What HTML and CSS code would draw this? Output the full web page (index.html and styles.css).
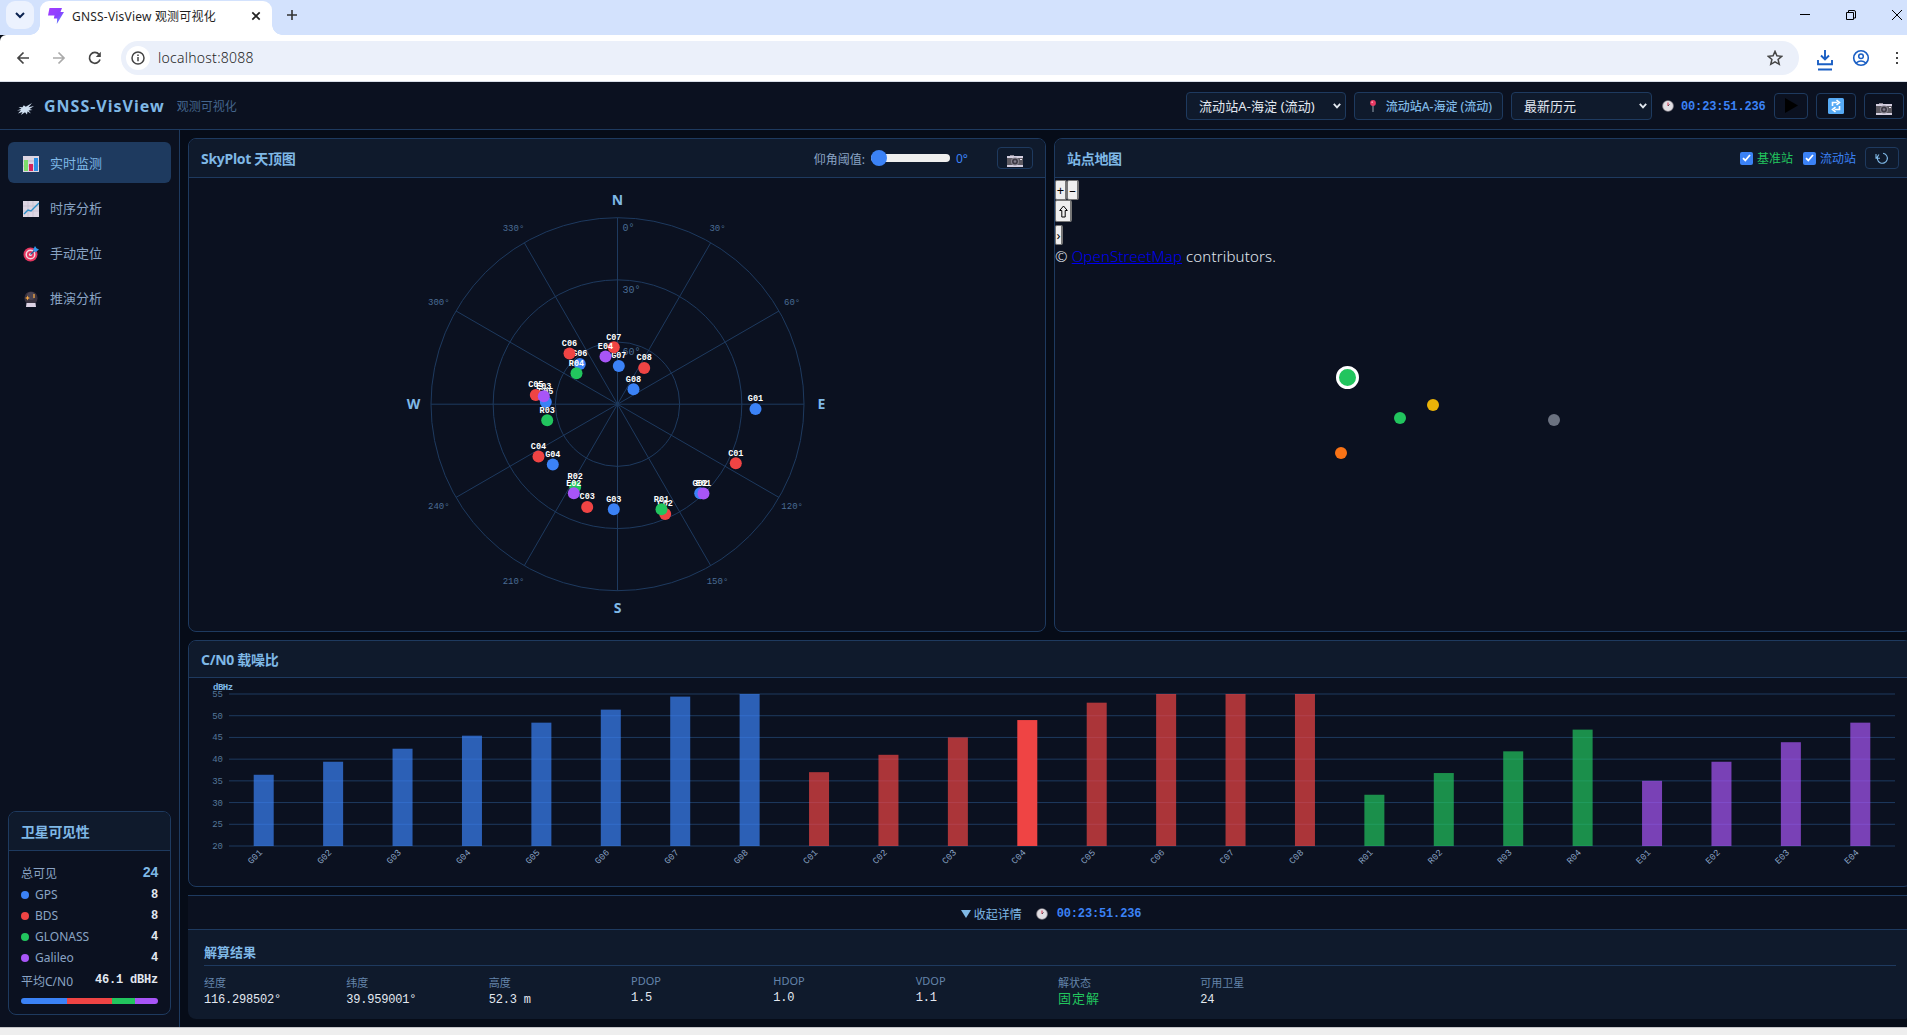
FILE: index.html
```
<!DOCTYPE html>
<html lang="zh-CN">
<head>
    <meta charset="UTF-8">
    <meta name="viewport" content="width=device-width, initial-scale=1.0">
    <title>GNSS-VisView 观测可视化</title>
    <link rel="stylesheet" href="styles.css">
</head>
<body>
    <!-- shared icons -->
    <svg class="defs" width="0" height="0">
        <symbol id="i-camera" viewBox="0 0 16 16">
            <path d="M0 4h16v11H0z" fill="#5d5a62"/>
            <path d="M0 4h16v2H0zM0 13h16v2H0z" fill="#d5cfe0"/>
            <path d="M3 3h4v1H3z" fill="#8e8a96"/>
            <circle cx="8" cy="9.5" r="4" fill="#8a8691"/>
            <circle cx="8" cy="9.5" r="3" fill="#3d3a45"/>
            <circle cx="8" cy="9.5" r="1.3" fill="#817d8c"/>
            <path d="M13 7h2v1h-2z" fill="#e7e2ee"/>
        </symbol>
        <symbol id="i-clock" viewBox="0 0 12 12">
            <circle cx="6" cy="6" r="5.8" fill="#8c8890"/>
            <circle cx="6" cy="6" r="4.9" fill="#e2dfe4"/>
            <path d="M6 6V2.5" stroke="#d8324c" stroke-width="1"/>
            <path d="M6 6l1.6-1.6" stroke="#3a3640" stroke-width="0.8"/>
        </symbol>
    </svg>

    <div class="browser">
        <div class="tab-strip">
            <div class="tab-search">
                <svg width="10" height="7" viewBox="0 0 10 7"><path d="M1 1l4 4 4-4" fill="none" stroke="#0b2350" stroke-width="2"/></svg>
            </div>
            <div class="tab">
                <svg class="favicon" width="16" height="16" viewBox="0 0 16 16">
                    <defs><linearGradient id="fav" x1="0" y1="0" x2="1" y2="1"><stop offset="0" stop-color="#a53dff"/><stop offset="0.55" stop-color="#8a40ff"/><stop offset="1" stop-color="#45b5ff"/></linearGradient></defs>
                    <path d="M1.5 0h12.500L12.500 4H16L8.800 16l.4-5.500H5.800L6.500 7.500H0z" fill="url(#fav)"/>
                </svg>
                <span class="tab-title">GNSS-VisView 观测可视化</span>
                <svg width="10" height="10" viewBox="0 0 10 10"><path d="M1.300 1.300l7.400 7.400M8.700 1.300L1.300 8.700" stroke="#222" stroke-width="1.700"/></svg>
            </div>
            <svg class="new-tab" width="12" height="12" viewBox="0 0 12 12"><path d="M6 1v10M1 6h10" stroke="#333" stroke-width="1.600"/></svg>
            <div class="window-buttons">
                <svg width="12" height="12" viewBox="0 0 12 12"><path d="M1 5.500h10" stroke="#000" stroke-width="1"/></svg>
                <svg width="12" height="12" viewBox="0 0 12 12"><path d="M1.500 3.500h7v7h-7zM3.500 3V1.500h5.500q1.500 0 1.500 1.500v6H9" fill="none" stroke="#000" stroke-width="1"/></svg>
                <svg width="12" height="12" viewBox="0 0 12 12"><path d="M1 1l10 10M11 1L1 11" stroke="#000" stroke-width="1"/></svg>
            </div>
        </div>
        <div class="toolbar">
            <svg width="14" height="14" viewBox="0 0 14 14"><path d="M13 7H2M7.500 1.500L2 7l5.500 5.500" fill="none" stroke="#444" stroke-width="1.700"/></svg>
            <svg width="14" height="14" viewBox="0 0 14 14"><path d="M1 7h11M6.500 1.500L12 7l-5.500 5.500" fill="none" stroke="#aaa" stroke-width="1.700"/></svg>
            <svg width="14" height="14" viewBox="0 0 14 14"><path d="M12 8.500A5.400 5.400 0 1 1 11 3.400" fill="none" stroke="#444" stroke-width="1.700"/><path d="M12.800 0.800v5.200H7.800z" fill="#444"/></svg>
            <div class="address">
                <span class="site-info">
                    <svg width="14" height="14" viewBox="0 0 14 14"><circle cx="7" cy="7" r="6" fill="none" stroke="#444" stroke-width="1.500"/><path d="M7 6v4.200M7 3.600v1.500" stroke="#444" stroke-width="1.500"/></svg>
                </span>
                <span class="url">localhost:8088</span>
                <svg class="star-icon" width="14" height="14" viewBox="0 0 14 14"><path d="M7 1.200l1.700 3.900 4.200.4-3.200 2.800 1 4.200L7 10.300l-3.700 2.200 1-4.200L1.100 5.500l4.200-.4z" fill="none" stroke="#444" stroke-width="1.300"/></svg>
            </div>
            <svg class="download" width="16" height="22" viewBox="0 0 16 22"><path d="M8 1v9M4 6.500l4 4 4-4M1 11v4.200h14V11M1 20.500h14" fill="none" stroke="#1a5fc4" stroke-width="1.900"/></svg>
            <svg class="profile" width="18" height="18" viewBox="0 0 18 18"><circle cx="9" cy="9" r="7.300" fill="none" stroke="#1a5fc4" stroke-width="1.600"/><circle cx="9" cy="7.200" r="2.300" fill="none" stroke="#1a5fc4" stroke-width="1.500"/><path d="M4 14q5-4 10 0" fill="none" stroke="#1a5fc4" stroke-width="1.500"/></svg>
            <svg class="menu-dots" width="4" height="14" viewBox="0 0 4 14"><path d="M1 1h2v2H1zM1 6h2v2H1zM1 11h2v2H1z" fill="#444"/></svg>
        </div>
    </div>

    <div class="app">
        <header class="header">
            <svg class="logo" width="18" height="14" viewBox="0 0 18 14"><path d="M1.500 5l4 .3 1.300-2 2 1.500L15 1l-3.500 4.300L17 4l-4.500 3 3 1-4 .5 2.500 3-3.500-2-.5 3-2-2.300L4 13l1.500-3L1 11.500l3-3.300L0 8.500l4.500-1.700z" fill="#cfdff0"/></svg>
            <h1 class="brand">GNSS-VisView</h1>
            <span class="subtitle">观测可视化</span>
            <div class="header-actions">
                <div class="select select-station"><span>流动站A-海淀 (流动)</span><svg width="8" height="6" viewBox="0 0 8 6"><path d="M.8.8L4 4.400 7.200.8" fill="none" stroke="#e2e8f0" stroke-width="1.800"/></svg></div>
                <div class="station-tag">
                    <svg width="8" height="12" viewBox="0 0 8 12"><path d="M4 5v7" stroke="#9aa5b1" stroke-width="1"/><circle cx="4" cy="3" r="2.900" fill="#e83a63"/><circle cx="3.200" cy="2.200" r=".9" fill="#ff9cb3"/></svg>
                    <span>流动站A-海淀 (流动)</span>
                </div>
                <div class="select select-epoch"><span>最新历元</span><svg width="8" height="6" viewBox="0 0 8 6"><path d="M.8.8L4 4.400 7.200.8" fill="none" stroke="#e2e8f0" stroke-width="1.800"/></svg></div>
                <div class="epoch"><svg width="12" height="12"><use href="#i-clock"/></svg><span class="time">00:23:51.236</span></div>
                <button class="btn btn-play"><svg width="13" height="15" viewBox="0 0 13 15"><path d="M0 0v15l13-7.500z" fill="#000"/></svg></button>
                <button class="btn btn-wide"><svg width="16" height="16" viewBox="0 0 16 16"><rect width="16" height="16" rx="1.500" fill="#56aaf5"/><path d="M4.500 8V4.500h5M8.500 2l3 2.500-3 2.500M11.500 8v3.500h-5M7.500 9l-3 2.500 3 2.500" fill="none" stroke="#fff" stroke-width="1.600"/></svg></button>
                <button class="btn btn-wide"><svg class="camera" width="16" height="16"><use href="#i-camera"/></svg></button>
            </div>
        </header>

        <div class="layout">
            <aside class="sidebar">
                <nav class="nav">
                    <a class="nav-item active">
                        <svg width="16" height="16" viewBox="0 0 16 16"><path d="M0 0h16v16H0z" fill="#ddd6e3"/><path d="M0 5h16M0 10h16" stroke="#b9b1c2" stroke-width=".7"/><path d="M1 4h4v11H1z" fill="#7ddc6a"/><path d="M6 8h4v7H6z" fill="#d3245c"/><path d="M11 2h4v13h-4z" fill="#2c8fe6"/></svg>
                        <span>实时监测</span>
                    </a>
                    <a class="nav-item">
                        <svg width="16" height="16" viewBox="0 0 16 16"><path d="M0 0h16v16H0z" fill="#ddd6e3"/><path d="M0 5h16M0 10h16M5 0v16M10 0v16" stroke="#c3bccb" stroke-width=".7"/><path d="M1 13l4-4 3 1 8-8" fill="none" stroke="#2c8fc8" stroke-width="1.400"/></svg>
                        <span>时序分析</span>
                    </a>
                    <a class="nav-item">
                        <svg width="16" height="16" viewBox="0 0 16 16"><circle cx="7.500" cy="8.500" r="7" fill="#e3355f"/><circle cx="7.500" cy="8.500" r="5" fill="#f3d7e0"/><circle cx="7.500" cy="8.500" r="3.500" fill="#e3355f"/><circle cx="7.500" cy="8.500" r="1.600" fill="#f3d7e0"/><path d="M7.500 8.500L13 3" stroke="#1c5e9a" stroke-width="1.300"/><path d="M10 4l2-4 1.500 2.200L16 3.500l-3.500 2.700z" fill="#2f9bef"/></svg>
                        <span>手动定位</span>
                    </a>
                    <a class="nav-item">
                        <svg width="16" height="16" viewBox="0 0 16 16"><circle cx="8" cy="7" r="6.600" fill="#39323f"/><circle cx="8" cy="5" r="4" fill="#4b4452"/><path d="M3.500 12h9l.5 4H3z" fill="#ddd3e4"/><path d="M4.500 4.500l.7 1.800 1.800.7-1.800.7-.7 1.800-.7-1.800L2 7l1.800-.7z" fill="#f5a742"/><path d="M11 3v4" stroke="#f5a742" stroke-width="1.300"/></svg>
                        <span>推演分析</span>
                    </a>
                </nav>

                <section class="card visibility">
                    <div class="card-header"><h3>卫星可见性</h3></div>
                    <div class="visibility-body">
                        <div class="row total"><span>总可见</span><b>24</b></div>
                        <div class="row"><span><i class="dot gps"></i>GPS</span><b>8</b></div>
                        <div class="row"><span><i class="dot bds"></i>BDS</span><b>8</b></div>
                        <div class="row"><span><i class="dot glonass"></i>GLONASS</span><b>4</b></div>
                        <div class="row"><span><i class="dot galileo"></i>Galileo</span><b>4</b></div>
                        <div class="row average"><span>平均C/N0</span><b>46.1 dBHz</b></div>
                        <div class="ratio-bar">
                            <i class="gps" style="flex: 8"></i><i class="bds" style="flex: 8"></i><i class="glonass" style="flex: 4"></i><i class="galileo" style="flex: 4"></i>
                        </div>
                    </div>
                </section>
            </aside>

            <main class="main">
                <div class="top-row">
                    <section class="card sky">
                        <div class="card-header">
                            <h3>SkyPlot 天顶图</h3>
                            <div class="sky-tools">
                                <span class="mask-label">仰角阈值:</span>
                                <span class="slider"><i class="thumb"></i></span>
                                <span class="mask-value">0°</span>
                                <button class="btn-sm btn-camera"><svg class="camera" width="16" height="16"><use href="#i-camera"/></svg></button>
                            </div>
                        </div>
                        <svg id="skyplot" class="skyplot" width="856" height="452" viewBox="0 0 856 452"></svg>
                    </section>

                    <section class="card map">
                        <div class="card-header">
                            <h3>站点地图</h3>
                            <div class="map-tools">
                                <label class="base"><i class="check"><svg width="9" height="8" viewBox="0 0 9 8"><path d="M1 4.200l2.300 2.300L8 1" fill="none" stroke="#fff" stroke-width="1.800"/></svg></i>基准站</label>
                                <label class="rover"><i class="check"><svg width="9" height="8" viewBox="0 0 9 8"><path d="M1 4.200l2.300 2.300L8 1" fill="none" stroke="#fff" stroke-width="1.800"/></svg></i>流动站</label>
                                <button class="btn-sm btn-reset"><svg width="14" height="13" viewBox="0 0 14 13"><path d="M3.400 3.200A5 5 0 1 0 8 1.300M1 2v4.300h4M1.300 6.200L4 2.500" fill="none" stroke="#7fb8e6" stroke-width="1.100"/></svg></button>
                            </div>
                        </div>
                        <div class="map-body">
                            <div class="ol-zoom"><button>+</button><button>–</button></div>
                            <div class="ol-rotate"><button><svg width="9" height="13" viewBox="0 0 9 13"><path d="M4.500 1L8.300 5.500H6.200v6.500H2.800V5.500H.7z" fill="none" stroke="#000" stroke-width="1"/></svg></button></div>
                            <div class="ol-attribution"><button>›</button></div>
                            <div class="attribution">© <a href="#">OpenStreetMap</a> contributors.</div>
                            <svg class="stations" width="857" height="452" viewBox="0 0 857 452">
                                <circle cx="292.500" cy="199.500" r="10" fill="#22c55e" stroke="#fff" stroke-width="3"/>
                                <circle cx="378" cy="227" r="6" fill="#eab308"/>
                                <circle cx="345" cy="240" r="6" fill="#22c55e"/>
                                <circle cx="499" cy="242" r="6" fill="#6b7280"/>
                                <circle cx="286" cy="275" r="6" fill="#f97316"/>
                            </svg>
                        </div>
                    </section>
                </div>

                <section class="card cn0">
                    <div class="card-header"><h3>C/N0 载噪比</h3></div>
                    <svg id="cn0-chart" class="cn0-chart" width="1722" height="208" viewBox="0 0 1722 208"></svg>
                </section>

                <section class="details">
                    <div class="details-toggle">
                        <svg width="10" height="8" viewBox="0 0 10 8"><path d="M0 0h10L5 8z" fill="#7fb8e6"/></svg>
                        <span class="toggle-text">收起详情</span>
                        <svg class="toggle-clock" width="12" height="12"><use href="#i-clock"/></svg>
                        <span class="time">00:23:51.236</span>
                    </div>
                    <div class="details-body">
                        <h4>解算结果</h4>
                        <div class="result-grid">
                            <div class="result"><span>经度</span><b>116.298502°</b></div>
                            <div class="result"><span>纬度</span><b>39.959001°</b></div>
                            <div class="result"><span>高度</span><b>52.3 m</b></div>
                            <div class="result latin"><span>PDOP</span><b>1.5</b></div>
                            <div class="result latin"><span>HDOP</span><b>1.0</b></div>
                            <div class="result latin"><span>VDOP</span><b>1.1</b></div>
                            <div class="result"><span>解状态</span><b class="fixed">固定解</b></div>
                            <div class="result"><span>可用卫星</span><b>24</b></div>
                        </div>
                    </div>
                </section>
            </main>
        </div>
    </div>
    <div class="taskbar"></div>

    <script src="charts.js"></script>
</body>
</html>
```

FILE: styles.css
```
* {
    box-sizing: border-box;
}

body {
    margin: 0;
    width: 1907px;
    height: 1035px;
    overflow: hidden;
    font-family: 'Noto Sans', 'Noto Sans CJK SC', sans-serif;
    background: #060c18;
    color: #e2e8f0;
}

h1, h3, h4 {
    margin: 0;
}

button {
    padding: 0;
    font-family: inherit;
}

svg {
    display: block;
    flex: none;
}

.defs {
    position: absolute;
}

/* Browser window */
.tab-strip {
    height: 35px;
    display: flex;
    align-items: flex-start;
    background: #d3e2fd;
}

.tab-search {
    width: 28px;
    height: 28px;
    margin: 1px 6px 0;
    border-radius: 9px;
    background: #ecf2fe;
    display: flex;
    align-items: center;
    justify-content: center;
}

.tab {
    position: relative;
    width: 232px;
    height: 34px;
    margin-top: 1px;
    padding: 0 11px 5px 8px;
    border-radius: 9px 9px 0 0;
    background: #fff;
    display: flex;
    align-items: center;
}

/* curved feet of the active tab */
.tab::before,
.tab::after {
    content: '';
    position: absolute;
    bottom: 0;
    width: 10px;
    height: 10px;
}

.tab::before {
    left: -10px;
    background: radial-gradient(circle at 0 0, transparent 9.5px, #fff 10px);
}

.tab::after {
    right: -10px;
    background: radial-gradient(circle at 100% 0, transparent 9.5px, #fff 10px);
}

.tab-title {
    margin: 0 auto 0 8px;
    font-size: 12px;
    letter-spacing: 0.2px;
    white-space: nowrap;
    color: #1f1f1f;
}

.new-tab {
    margin: 9px 0 0 14px;
}

.window-buttons {
    display: flex;
    gap: 34px;
    margin: 9px 4px 0 auto;
}

.toolbar {
    height: 47px;
    padding: 0 8px 0 16px;
    border-bottom: 1px solid #d9dfe8;
    border-radius: 6px 0 0 0;
    background: #fff;
    display: flex;
    align-items: center;
}

.toolbar > svg:nth-child(2),
.toolbar > svg:nth-child(3) {
    margin-left: 22px;
}

.address {
    flex: 1;
    height: 34px;
    margin-left: 19px;
    padding: 0 16px 0 5px;
    border-radius: 17px;
    background: #ebf0fa;
    display: flex;
    align-items: center;
}

.site-info {
    width: 24px;
    height: 24px;
    border-radius: 50%;
    background: #fff;
    display: flex;
    align-items: center;
    justify-content: center;
}

.url {
    margin: -1px 0 0 8px;
    font-size: 14px;
    font-weight: 300;
    letter-spacing: 0.25px;
    color: #1f1f1f;
}

.star-icon {
    margin-left: auto;
    width: 16px;
    height: 16px;
}

.download {
    margin: 4px 0 0 18px;
}

.profile {
    margin-left: 19px;
}

.menu-dots {
    margin-left: 25px;
}

/* App frame, wider than the window */
.app {
    width: 1920px;
    height: 945px;
    display: flex;
    flex-direction: column;
}

.header {
    height: 48px;
    padding: 0 16px 0 17px;
    border-bottom: 1px solid #1e3a5f;
    background: #0b1120;
    display: flex;
    align-items: center;
}

.logo {
    margin-top: 6px;
}

.brand {
    margin-left: 9px;
    font-size: 16px;
    line-height: 24px;
    letter-spacing: 1px;
    color: #7fb8e6;
}

.subtitle {
    margin: 1px 0 0 12px;
    font-size: 12px;
    color: #44658c;
}

.header-actions {
    margin-left: auto;
    display: flex;
    align-items: center;
    gap: 8px;
}

.select,
.station-tag {
    height: 28px;
    border: 1px solid #1e3a5f;
    border-radius: 4px;
    background: #0f1a2c;
    font-size: 13px;
    display: flex;
    align-items: center;
    justify-content: space-between;
    white-space: nowrap;
}

.select {
    padding: 0 4px 0 12px;
}

.select-station {
    width: 160px;
    letter-spacing: 0.1px;
}

.select-epoch {
    width: 141px;
}

.station-tag {
    width: 149px;
    padding: 0 10px 0 14px;
    font-size: 12px;
    font-weight: 500;
    color: #7fb8e6;
}

.epoch {
    width: 106px;
    padding-left: 2px;
    display: flex;
    align-items: center;
    gap: 7px;
}

.time {
    font-family: 'Liberation Mono', monospace;
    font-size: 12px;
    font-weight: bold;
    letter-spacing: -0.15px;
    color: #3b82f6;
}

.epoch .time {
    margin-top: 2px;
}

.btn,
.btn-sm {
    height: 26px;
    border: 1px solid #1e3a5f;
    border-radius: 4px;
    background: #0b1120;
    display: flex;
    align-items: center;
    justify-content: center;
}

.btn-play {
    width: 34px;
}

.btn-wide {
    width: 40px;
}

.btn-wide .camera {
    margin-top: 4px;
}

.layout {
    flex: 1;
    min-height: 0;
    display: flex;
}

/* Sidebar */
.sidebar {
    width: 180px;
    padding: 12px 8px;
    border-right: 1px solid #1e3a5f;
    background: #0b1120;
    display: flex;
    flex-direction: column;
    justify-content: space-between;
}

.nav {
    display: flex;
    flex-direction: column;
    gap: 4px;
}

.nav-item {
    height: 41px;
    padding: 0 15px;
    border-radius: 6px;
    font-size: 13px;
    color: #8aa4c4;
    display: flex;
    align-items: center;
    gap: 11px;
}

.nav-item svg {
    margin-top: 2px;
}

.nav-item.active {
    background: #1e3a5f;
    color: #7fb8e6;
}

.card {
    border: 1px solid #1e3a5f;
    border-radius: 8px;
    background: #0b1120;
    overflow: hidden;
}

.card-header {
    height: 39px;
    padding: 0 12px;
    border-bottom: 1px solid #1e3a5f;
    background: #0f1a2c;
    display: flex;
    align-items: center;
    justify-content: space-between;
}

.card-header h3 {
    font-size: 14px;
    font-weight: bold;
    letter-spacing: -0.3px;
    color: #7fb8e6;
}

.visibility {
    height: 204px;
}

.visibility-body {
    padding: 10px 12px;
}

.row {
    height: 21px;
    display: flex;
    align-items: center;
    justify-content: space-between;
    font-size: 12px;
    color: #8aa4c4;
}

.row.total {
    height: 23px;
}

.row.average {
    height: 25px;
}

.row.average b {
    margin-top: -2px;
}

.row b {
    font-family: 'Liberation Mono', monospace;
    font-size: 12px;
    letter-spacing: -0.2px;
    color: #e2e8f0;
}

.row.total b {
    font-size: 14px;
    letter-spacing: -0.7px;
    color: #7fb8e6;
}

.dot {
    display: inline-block;
    width: 8px;
    height: 8px;
    margin-right: 6px;
    border-radius: 50%;
}

.gps {
    background: #3b82f6;
}

.bds {
    background: #ef4444;
}

.glonass {
    background: #22c55e;
}

.galileo {
    background: #a855f7;
}

.ratio-bar {
    height: 6px;
    margin-top: 5px;
    border-radius: 3px;
    overflow: hidden;
    display: flex;
}

/* Main area */
.main {
    flex: 1;
    padding: 8px;
    display: flex;
    flex-direction: column;
    gap: 8px;
}

.top-row {
    height: 494px;
    display: grid;
    grid-template-columns: 1fr 1fr;
    gap: 8px;
}

.sky-tools {
    display: flex;
    align-items: center;
    font-size: 12px;
    color: #8aa4c4;
}

.mask-label {
    margin-top: 2px;
}

.slider {
    width: 79px;
    height: 8px;
    margin: -1px 6px 0;
    border-radius: 4px;
    background: #efefef;
    display: flex;
    align-items: center;
}

.thumb {
    flex: none;
    width: 16px;
    height: 16px;
    border-radius: 50%;
    background: #3b82f6;
}

.mask-value {
    width: 41px;
    color: #3b82f6;
}

.btn-sm {
    height: 22px;
    background: #0f1a2c;
}

.btn-camera {
    width: 36px;
}

.btn-camera .camera {
    margin-top: 4px;
}

.map-tools {
    display: flex;
    align-items: center;
    gap: 10px;
    font-size: 12px;
}

.map-tools label {
    display: flex;
    align-items: center;
    gap: 4px;
}

.map-tools label.rover {
    margin-right: -1px;
}

.base {
    color: #22c55e;
}

.rover {
    color: #3b82f6;
}

.check {
    width: 13px;
    height: 13px;
    border-radius: 2px;
    background: #3b82f6;
    display: flex;
    align-items: center;
    justify-content: center;
}

.btn-reset {
    width: 34px;
}

.map-body {
    position: relative;
    padding-top: 2px;
}

/* map markers lie over the controls */
.stations {
    position: absolute;
    top: 0;
    left: 0;
}

.map-body button {
    height: 20px;
    border: 2px solid #767676;
    border-width: 1px 2px 1px 1px;
    border-radius: 2px;
    background: #efefef;
    font-size: 13px;
    line-height: 16px;
    color: #000;
}

.ol-zoom,
.ol-rotate,
.ol-attribution {
    display: flex;
}

.ol-zoom button {
    width: 12px;
}

.map-body .ol-rotate button {
    width: 17px;
    height: 22px;
    display: flex;
    align-items: center;
    justify-content: center;
}

.ol-attribution {
    margin-top: 3px;
}

.ol-attribution button {
    width: 8px;
}

.attribution {
    font-size: 15px;
    font-weight: 300;
    line-height: 22px;
    letter-spacing: 0.15px;
}

.attribution a {
    color: #0000ee;
}

.cn0 {
    height: 247px;
}

.cn0 .card-header {
    height: 37px;
}

svg text {
    font-family: 'Liberation Mono', monospace;
}

.grid-line {
    fill: none;
    stroke: #1e3a5f;
}

svg .cardinal {
    font-family: 'Noto Sans', sans-serif;
    font-size: 14px;
    font-weight: bold;
    fill: #7fb8e6;
    text-anchor: middle;
}

.degree {
    font-size: 9px;
    fill: #4a6c94;
    text-anchor: middle;
}

.elevation {
    font-size: 10px;
    fill: #4a6c94;
}

.sat-label {
    font-size: 8.500px;
    font-weight: bold;
    fill: #fff;
    text-anchor: middle;
}

.axis-label {
    font-size: 9px;
    fill: #557799;
    text-anchor: end;
}

.axis-unit {
    font-size: 9px;
    font-weight: bold;
    letter-spacing: -0.5px;
    fill: #7fb8e6;
}

.bar-label {
    font-size: 9px;
    fill: #8aa4c4;
    text-anchor: end;
}

.details {
    height: 124px;
    border-radius: 0 0 8px 8px;
    overflow: hidden;
    background: #0f1a2c;
}

.details-toggle {
    height: 35px;
    padding: 2px 0 0 2px;
    border-top: 1px solid #1e3a5f;
    border-bottom: 1px solid #1e3a5f;
    background: #0b1120;
    display: flex;
    align-items: center;
    justify-content: center;
}

.toggle-text {
    margin: 0 14px 0 3px;
    font-size: 12px;
    color: #7fb8e6;
}

.toggle-clock {
    margin-right: 9px;
}

.details-body {
    padding: 9px 16px 0;
}

.details-body h4 {
    height: 27px;
    border-bottom: 1px solid #1e3a5f;
    font-size: 13px;
    line-height: 26px;
    color: #7fb8e6;
}

.result-grid {
    margin-top: 9px;
    display: grid;
    grid-template-columns: repeat(12, 1fr);
    column-gap: 16px;
}

.result {
    display: flex;
    flex-direction: column;
}

.result span {
    font-size: 11px;
    line-height: 16px;
    color: #6484aa;
}

.result b {
    margin-top: 1px;
    font-family: 'Liberation Mono', 'Noto Sans CJK SC', monospace;
    font-size: 12px;
    line-height: 16px;
    font-weight: normal;
    letter-spacing: -0.2px;
    color: #e2e8f0;
}

.result.latin {
    margin-top: -2px;
}

.result b.fixed {
    font-size: 13px;
    letter-spacing: 1px;
    color: #22c55e;
}

.taskbar {
    height: 8px;
    border-top: 1px solid #c4c4c8;
    background: #eee;
}
```

FILE: charts.js
```
const NS = 'http://www.w3.org/2000/svg';
const COLORS = { G: '#3b82f6', C: '#ef4444', R: '#22c55e', E: '#a855f7' };

function add(parent, tag, attrs, text) {
    const node = document.createElementNS(NS, tag);
    for (const key in attrs) {
        node.setAttribute(key, attrs[key]);
    }
    if (text !== undefined) {
        node.textContent = text;
    }
    parent.appendChild(node);
}

// Satellites: [id, x offset, y offset] from the zenith
const satellites = [
    ['G01', 138, 4.7], ['G02', 82.7, 89], ['G03', -3.7, 105], ['G04', -64.7, 60.3],
    ['G05', -71.7, -2.3], ['G06', -37.7, -40.3], ['G07', 1.3, -38.3], ['G08', 16, -15],
    ['C01', 118.3, 59], ['C02', 47.7, 109.7], ['C03', -30.3, 102.7], ['C04', -79, 52.3],
    ['C05', -81.7, -9.3], ['C06', -48, -50.7], ['C07', -3.7, -57], ['C08', 26.7, -36.3],
    ['R01', 44, 105], ['R02', -42.3, 82.7], ['R03', -70.3, 16], ['R04', -41, -31],
    ['E01', 86, 89.3], ['E02', -43.7, 89], ['E03', -73.7, -8], ['E04', -12, -47.7]
];

function drawSkyPlot() {
    const svg = document.getElementById('skyplot');
    const cx = 428.5, cy = 226.2, r = 186.5;

    [0, 30, 60].forEach(el => {
        const ring = r * (90 - el) / 90;
        add(svg, 'circle', { cx, cy, r: ring, class: 'grid-line' });
        add(svg, 'text', { x: cx + 5, y: cy - ring + 13, class: 'elevation' }, el + '°');
    });

    for (let az = 0; az < 360; az += 30) {
        const a = az * Math.PI / 180;
        const sin = Math.sin(a), cos = Math.cos(a);
        add(svg, 'line', { x1: cx, y1: cy, x2: cx + r * sin, y2: cy - r * cos, class: 'grid-line' });
        const name = { 0: 'N', 90: 'E', 180: 'S', 270: 'W' }[az];
        add(svg, 'text', {
            x: cx + 204 * sin - (name ? 0 : 2),
            y: cy - 204 * cos + (name ? 4.5 : 3),
            class: name ? 'cardinal' : 'degree'
        }, name || az + '°');
    }

    satellites.forEach(([id, dx, dy]) => {
        add(svg, 'circle', { cx: cx + dx, cy: cy + dy, r: 6, fill: COLORS[id[0]] });
        add(svg, 'text', { x: cx + dx, y: cy + dy - 7.5, class: 'sat-label' }, id);
    });
}

const cn0 = {
    G: [36.4, 39.4, 42.4, 45.4, 48.4, 51.4, 54.4, 55],
    C: [37, 41, 45, 49, 53, 55, 55, 55],
    R: [31.8, 36.8, 41.8, 46.8],
    E: [35, 39.4, 43.9, 48.4]
};

function drawCn0() {
    const svg = document.getElementById('cn0-chart');
    const left = 40, right = 1706, bottom = 168, unit = 152 / 35;

    for (let v = 20; v <= 55; v += 5) {
        const y = bottom - (v - 20) * unit;
        add(svg, 'line', { x1: left, x2: right, y1: y, y2: y, class: 'grid-line' });
        add(svg, 'text', { x: left - 6, y: y + 3, class: 'axis-label' }, v);
    }
    add(svg, 'text', { x: 24, y: 12, class: 'axis-unit' }, 'dBHz');

    const step = (right - left) / 24;
    let i = 0;
    for (const sys in cn0) {
        cn0[sys].forEach((value, n) => {
            const id = sys + '0' + (n + 1);
            const x = left + step * (i + 0.5);
            const h = (value - 20) * unit;
            add(svg, 'rect', {
                x: x - 10, y: bottom - h, width: 20, height: h,
                fill: COLORS[sys], opacity: id === 'C04' ? 1 : 0.7
            });
            add(svg, 'text', {
                x: x - 1, y: bottom + 7, class: 'bar-label',
                transform: `rotate(-45 ${x - 1} ${bottom + 7})`
            }, id);
            i++;
        });
    }
}

drawSkyPlot();
drawCn0();
```
